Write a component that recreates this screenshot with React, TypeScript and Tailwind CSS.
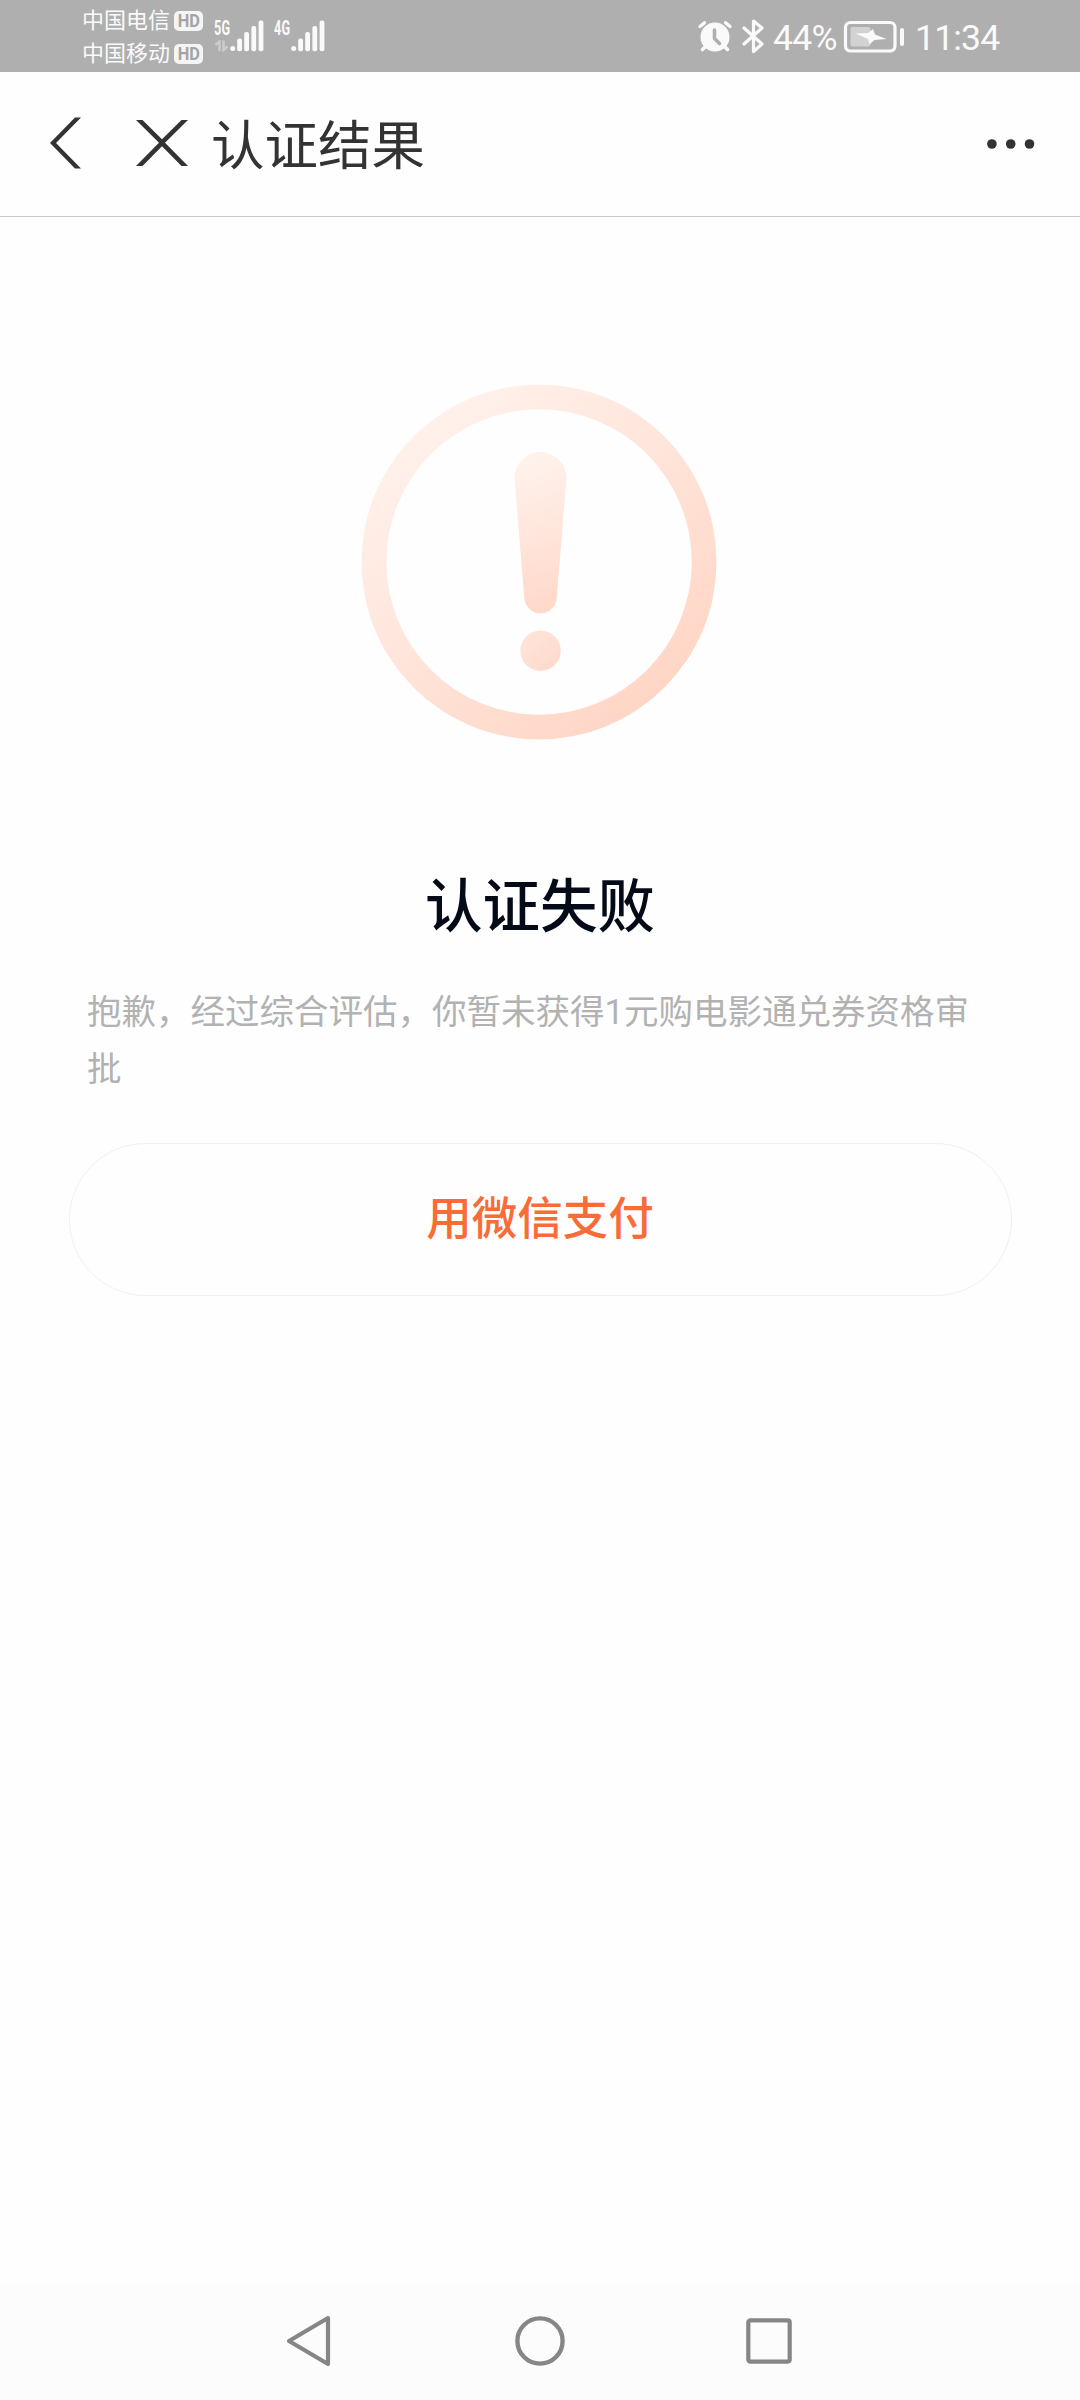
const carriers = ['中国电信', '中国移动'];

function SignalBars() {
  return (
    <svg width="34" height="32" viewBox="0 0 34 32" className="shrink-0" fill="#fafafa">
      <circle cx="2.7" cy="28.6" r="2.5" />
      <rect x="7.2" y="18.5" width="4.8" height="12.8" rx="2" />
      <rect x="14.2" y="12" width="4.8" height="19.3" rx="2" />
      <rect x="21.4" y="6" width="4.8" height="25.3" rx="2" />
      <rect x="28.6" y="0.4" width="4.8" height="30.9" rx="2" />
    </svg>
  );
}

function NetworkLabel({ children }: { children: string }) {
  return (
    <span className="block w-0 h-4 text-[20px] leading-4 font-bold tracking-[0.5px] origin-left scale-x-[0.63] whitespace-nowrap">
      {children}
    </span>
  );
}

function StatusBar() {
  return (
    <div className="h-[72px] shrink-0 bg-[#afafaf] text-[#fafafa] flex items-start justify-between pl-[82px] pr-[77px]">
      <div className="flex">
        <div className="flex flex-col pt-1">
          {carriers.map((name) => (
            <div key={name} className="h-[33px] flex items-center">
              <span className="w-[92px] text-[22px] leading-[33px] whitespace-nowrap">{name}</span>
              <span className="w-[29px] h-5 rounded-[5px] bg-[#f5f5f5] text-[#a4a4a4] text-[19px] leading-5 font-bold flex items-center justify-center">
                <span className="scale-x-[0.86]">HD</span>
              </span>
            </div>
          ))}
        </div>

        {/* SIM 1 */}
        <div className="w-[60px] pl-[11px] pt-5 flex">
          <div className="w-4">
            <NetworkLabel>5G</NetworkLabel>
            <svg width="16" height="12" viewBox="0 0 16 12" className="mt-1" fill="none" stroke="#cdcdcd" strokeWidth="2.4">
              <path d="M1.500 5L5.500 1.500V11M9.500 0.500V10L13.500 6.500" />
            </svg>
          </div>
          <SignalBars />
        </div>

        {/* SIM 2 */}
        <div className="pl-[11px] pt-5 flex">
          <div className="w-[17px]">
            <NetworkLabel>4G</NetworkLabel>
          </div>
          <SignalBars />
        </div>
      </div>

      <div className="flex items-start">
        <svg width="36" height="34" viewBox="0 0 36 34" className="mt-[19px] mr-[8px]">
          <circle cx="18" cy="18" r="14.5" fill="#fafafa" />
          <path d="M3 7.5L7.500 3.800M33 7.5L28.500 3.800" stroke="#fafafa" strokeWidth="3.400" strokeLinecap="round" />
          <path d="M8 28l-2.500 2.500M28 28l2.500 2.500" stroke="#fafafa" strokeWidth="3.600" strokeLinecap="round" />
          <path d="M17.500 11v8.500l5 5" fill="none" stroke="#afafaf" strokeWidth="3.6" strokeLinecap="round" strokeLinejoin="round" />
        </svg>
        <svg width="24" height="36" viewBox="0 0 24 36" className="mt-[18px] mr-[8px]" fill="none" stroke="#fafafa" strokeWidth="3.2" strokeLinecap="round" strokeLinejoin="round">
          <path d="M3 10l18 16-8.500 7.500V3L21 10 3 26" />
        </svg>
        <span className="w-[70px] pt-[17px] text-[35.500px] leading-[42px] tracking-[-0.7px] whitespace-nowrap">44%</span>
        <svg width="61" height="33" viewBox="0 0 61 33" className="mt-5">
          <rect x="2.500" y="2.500" width="49.500" height="28.500" rx="5" fill="none" stroke="#fafafa" strokeWidth="3.200" />
          <rect x="7.500" y="7" width="20" height="19.500" rx="2" fill="#d2d2d2" />
          <path d="M12.500 13.500l12.500-.500 5-4 2 5.500 11.500 4.500-12 1-5 4.200-1.500-5.200z" fill="#fafafa" />
          <rect x="57" y="8" width="4" height="18" rx="2" fill="#fafafa" />
        </svg>
        <span className="w-[88px] ml-[11px] pt-[17px] text-[35.500px] leading-[42px] tracking-[-0.8px] whitespace-nowrap">11:34</span>
      </div>
    </div>
  );
}

function Header() {
  return (
    <header className="h-[145px] shrink-0 border-b border-[#c8c8c8] flex items-center pl-[50px] pr-[45px] text-[#333333]">
      <svg width="31" height="52" viewBox="0 0 31 52" className="-mt-0.5" fill="#333333">
        <path d="M25 .5h6L6 26l25 25.500h-6L0 26z" />
      </svg>
      <svg width="52" height="48" viewBox="0 0 52 48" className="ml-[55px] -mt-0.5" fill="#333333">
        <path d="M0 1h6.500L26 20.200 45.500 1H52L29 23.700 52 47h-6.500L26 27.300 6.500 47H0l23-23.300z" />
      </svg>
      <h1 className="ml-[23px] mt-1.5 text-[53.500px] leading-[72px] font-normal">认证结果</h1>
      <svg width="48" height="12" viewBox="0 0 48 12" className="ml-auto" fill="#333333">
        <circle cx="4.900" cy="6" r="4.800" />
        <circle cx="23.700" cy="6" r="4.800" />
        <circle cx="42.500" cy="6" r="4.800" />
      </svg>
    </header>
  );
}

function WarningIcon() {
  return (
    <svg width="356" height="356" viewBox="0 0 356 356" className="mr-[3px]">
      <defs>
        <linearGradient id="ring" x1="0.15" y1="0.1" x2="0.8" y2="0.9">
          <stop offset="0" stopColor="#fff2ec" />
          <stop offset="1" stopColor="#ffd6c6" />
        </linearGradient>
        <linearGradient id="mark" x1="0.4" y1="0" x2="0.5" y2="1">
          <stop offset="0" stopColor="#fff3ed" />
          <stop offset="1" stopColor="#ffd8c9" />
        </linearGradient>
        <linearGradient id="dot" x1="0" y1="0" x2="1" y2="1">
          <stop offset="0" stopColor="#ffe6dc" />
          <stop offset="1" stopColor="#ffd8c9" />
        </linearGradient>
      </defs>
      <path
        fill="url(#ring)"
        fillRule="evenodd"
        d="M178 .5a177.500 177.500 0 1 0 0 355a177.500 177.500 0 1 0 0-355zM178 25.300a152.700 152.700 0 1 1 0 305.400a152.700 152.700 0 1 1 0-305.400z"
      />
      <path fill="url(#mark)" d="M153.500 94a26 26 0 0 1 52 0l-9.700 119a16.300 16.300 0 0 1-32.600 0z" />
      <circle cx="179.500" cy="266.700" r="20.200" fill="url(#dot)" />
    </svg>
  );
}

function NavBar() {
  return (
    <nav className="h-[117px] shrink-0 bg-[#fcfcfc] flex items-center justify-between pl-[285px] pr-[286px] pb-px">
      <svg width="48" height="54" viewBox="0 0 48 54" fill="none" stroke="#868686" strokeWidth="4.200" strokeLinejoin="round">
        <path d="M43 4L4 27l39 23z" />
      </svg>
      <svg width="54" height="54" viewBox="0 0 54 54" className="ml-0.5" fill="none" stroke="#868686" strokeWidth="4.400">
        <circle cx="27" cy="27" r="22.600" />
      </svg>
      <svg width="50" height="50" viewBox="0 0 50 50" fill="none" stroke="#868686" strokeWidth="4.200">
        <rect x="4.300" y="4.400" width="41.400" height="41.200" rx="2" />
      </svg>
    </nav>
  );
}

export default function App() {
  return (
    <div lang="zh-CN" className="w-[1080px] h-[2400px] bg-[#fefefe] flex flex-col overflow-hidden font-[Roboto,'Noto_Sans_CJK_SC',sans-serif]">
      <StatusBar />
      <Header />
      <main className="flex-1 flex flex-col items-center pt-[167px]">
        <WarningIcon />
        <h2 className="mt-[126px] text-[57.500px] leading-[84px] font-medium text-[#050a18]">认证失败</h2>
        <p className="mt-[34px] w-full pl-[87px] pr-[100px] text-[34.500px] leading-[57px] text-[#b2b2b2]">
          抱歉，经过综合评估，你暂未获得1元购电影通兑券资格审批
        </p>
        <button className="mt-[45px] w-[943px] h-[153px] pt-0.5 rounded-full border border-[#f0f0f0] text-[45.500px] font-medium text-[#f96b37]">
          用微信支付
        </button>
      </main>
      <NavBar />
    </div>
  );
}
